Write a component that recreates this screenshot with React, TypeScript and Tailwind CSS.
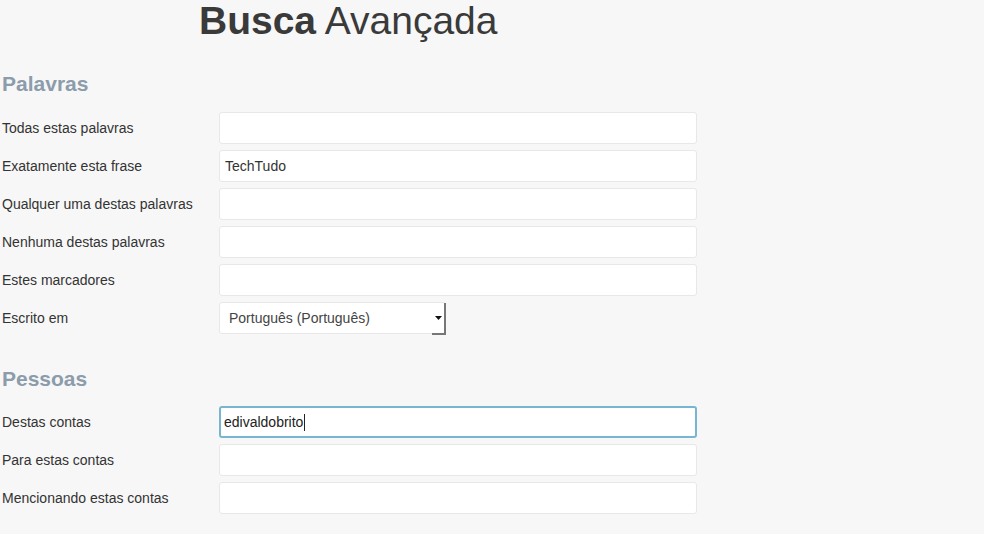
const font = { fontFamily: '"Liberation Sans", Arial, sans-serif' };

type Field = { label: string; value?: string; focused?: boolean };

const palavras: Field[] = [
  { label: "Todas estas palavras" },
  { label: "Exatamente esta frase", value: "TechTudo" },
  { label: "Qualquer uma destas palavras" },
  { label: "Nenhuma destas palavras" },
  { label: "Estes marcadores" },
];

const pessoas: Field[] = [
  { label: "Destas contas", value: "edivaldobrito", focused: true },
  { label: "Para estas contas" },
  { label: "Mencionando estas contas" },
];

function Row({ label, value, focused }: Field) {
  return (
    <div className="flex items-center">
      <label className="w-[219px] pl-[2px] pt-[1px] text-[14px] text-[#333]">{label}</label>
      <div
        className={
          focused
            ? "flex h-[32px] w-[478px] items-center rounded-[3px] border-2 border-[#78b6d0] bg-white pl-[3px] text-[14px] text-[#222]"
            : "flex h-[32px] w-[478px] items-center rounded-[3px] border border-[#e8e8e8] bg-white pl-[5px] text-[14px] text-[#333]"
        }
      >
        {value}
        {focused && <span className="ml-[1px] h-[17px] w-[1px] bg-[#222]" />}
      </div>
    </div>
  );
}

export default function App() {
  return (
    <div className="min-h-[534px] w-[984px] bg-[#f7f7f7] pt-px" style={font}>
      <h1 className="-mt-[3px] pl-[199px] text-[39px] leading-[46px] text-[#3a3a3a]">
        <span className="font-bold">Busca</span> Avançada
      </h1>

      <h2 className="mt-[28px] pl-[2px] text-[21px] font-bold leading-[24px] text-[#8c9cab]">
        Palavras
      </h2>
      <div className="mt-[16px] flex flex-col gap-[6px]">
        {palavras.map((f) => (
          <Row key={f.label} {...f} />
        ))}
        <div className="flex items-center">
          <label className="w-[219px] pl-[2px] pt-[1px] text-[14px] text-[#333]">Escrito em</label>
          <div className="relative flex h-[32px] w-[227px] items-center rounded-[3px] border border-[#e8e8e8] bg-white pl-[9px] text-[14px] text-[#444]">
            Português (Português)
            <div className="absolute right-[-1px] top-0 flex h-[32px] w-[14px] items-center justify-center border-b-2 border-r-2 border-[#777]">
              <svg width="7" height="4" viewBox="0 0 7 4">
                <path d="M0 0h7L3.5 4z" fill="#111" />
              </svg>
            </div>
          </div>
        </div>
      </div>

      <h2 className="mt-[33px] pl-[2px] text-[21px] font-bold leading-[24px] text-[#8c9cab]">
        Pessoas
      </h2>
      <div className="mt-[15px] flex flex-col gap-[6px]">
        {pessoas.map((f) => (
          <Row key={f.label} {...f} />
        ))}
      </div>
    </div>
  );
}
